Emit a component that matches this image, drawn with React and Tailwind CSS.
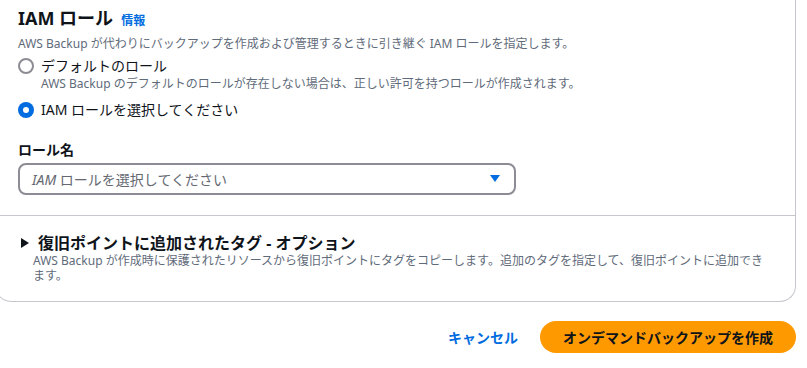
import React from 'react';

const FONT = { fontFamily: '"Noto Sans", "Noto Sans CJK JP", sans-serif' };

function Radio({ checked }) {
  return checked ? (
    <span className="mt-[1px] flex h-[16px] w-[16px] shrink-0 items-center justify-center rounded-full bg-[#006ce0]">
      <span className="h-[6px] w-[6px] rounded-full bg-white" />
    </span>
  ) : (
    <span className="mt-[1px] h-[16px] w-[16px] shrink-0 rounded-full border-2 border-[#8c8c94] bg-white" />
  );
}

export default function App() {
  return (
    <div className="h-[368px] w-[807px] overflow-hidden bg-white text-[#0f141a]" style={FONT}>
      <div className="ml-[-5px] w-[801px] rounded-b-[16px] border border-t-0 border-[#c6c6cd] bg-white">
        {/* IAM role section */}
        <div className="pl-[22px] pr-[20px] pt-[7px] pb-[20px]">
          <div className="flex items-baseline gap-[8px]">
            <h2 className="text-[18px] font-bold leading-[22px]">IAM ロール</h2>
            <a className="text-[12px] font-bold text-[#006ce0]">情報</a>
          </div>
          <p className="mt-[6px] text-[12px] leading-[16px] text-[#5f6b7a]">
            AWS Backup が代わりにバックアップを作成および管理するときに引き継ぐ IAM ロールを指定します。
          </p>
          <div className="mt-[5px] flex gap-[7px]">
            <Radio checked={false} />
            <div>
              <div className="text-[14px] leading-[18px]">デフォルトのロール</div>
              <div className="text-[12px] leading-[17px] text-[#5f6b7a]">
                AWS Backup のデフォルトのロールが存在しない場合は、正しい許可を持つロールが作成されます。
              </div>
            </div>
          </div>
          <div className="mt-[9px] flex gap-[7px]">
            <Radio checked />
            <div className="text-[14px] leading-[18px]">IAM ロールを選択してください</div>
          </div>

          <label className="mt-[22px] block text-[14px] font-bold leading-[18px]">ロール名</label>
          <div className="mt-[4px] flex h-[32px] w-[498px] items-center justify-between rounded-[8px] border-2 border-[#8c8c94] pl-[12px] pr-[14px]">
            <span className="text-[14px] text-[#656871]">
              <i>IAM</i> ロールを選択してください
            </span>
            <svg width="10" height="8" viewBox="0 0 10 8">
              <path d="M0 0h10L5 7z" fill="#006ce0" />
            </svg>
          </div>
        </div>

        {/* Tags section */}
        <div className="border-t border-[#c6c6cd] pl-[22px] pr-[24px] pt-[17px] pb-[18px]">
          <div className="flex items-center gap-[9px]">
            <svg width="8" height="10" viewBox="0 0 8 10" className="ml-[3px]">
              <path d="M0 0l8 5-8 5z" fill="#0f141a" />
            </svg>
            <h3 className="text-[16px] font-bold leading-[20px]">復旧ポイントに追加されたタグ - オプション</h3>
          </div>
          <p className="pl-[15px] text-[12px] leading-[15px] text-[#5f6b7a]">
            AWS Backup が作成時に保護されたリソースから復旧ポイントにタグをコピーします。追加のタグを指定して、復旧ポイントに追加できます。
          </p>
        </div>
      </div>

      {/* Actions */}
      <div className="mt-[19px] flex items-center justify-end gap-[22px] pr-[11px]">
        <button className="text-[14px] font-bold text-[#006ce0]">キャンセル</button>
        <button className="h-[32px] rounded-full bg-[#ff9900] px-[23px] text-[14px] font-bold text-[#0f141a]">
          オンデマンドバックアップを作成
        </button>
      </div>
    </div>
  );
}
